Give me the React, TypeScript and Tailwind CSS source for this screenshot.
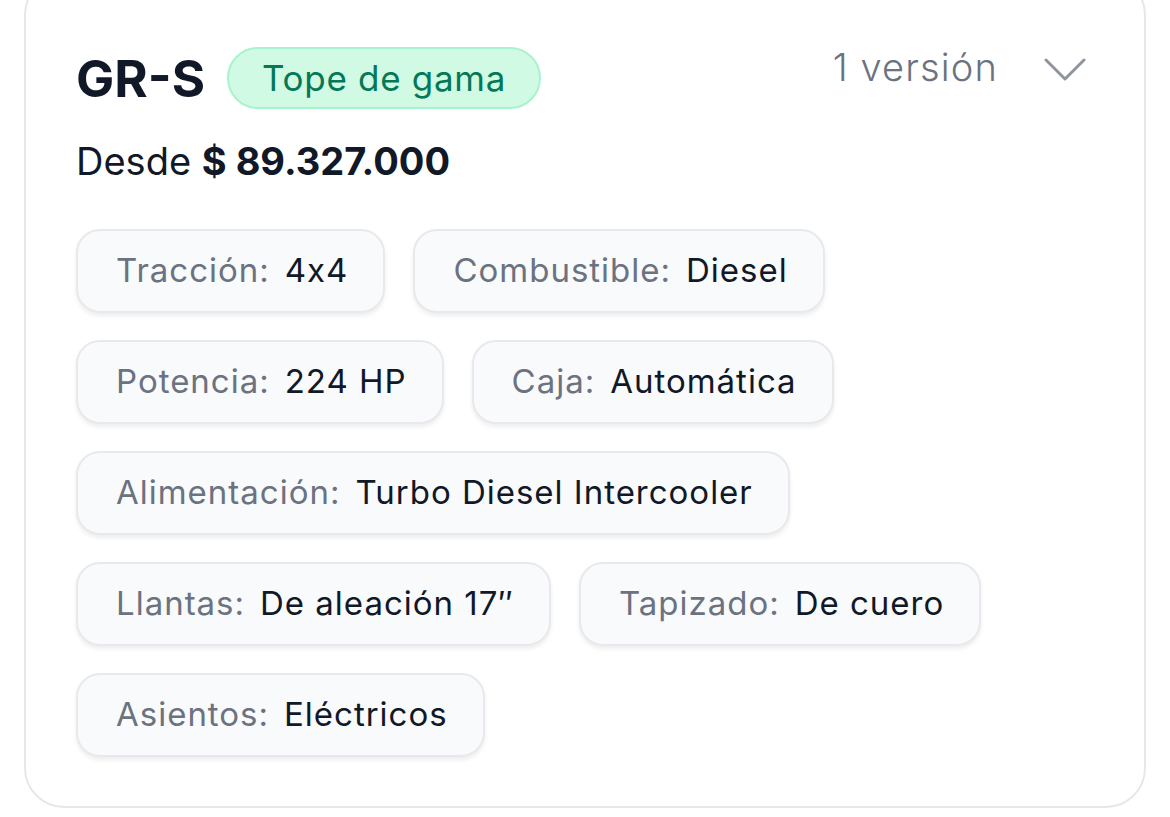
import React from "react";

const specs: { label: string; value: string }[][] = [
  [
    { label: "Tracción:", value: "4x4" },
    { label: "Combustible:", value: "Diesel" },
  ],
  [
    { label: "Potencia:", value: "224 HP" },
    { label: "Caja:", value: "Automática" },
  ],
  [{ label: "Alimentación:", value: "Turbo Diesel Intercooler" }],
  [
    { label: "Llantas:", value: "De aleación 17″" },
    { label: "Tapizado:", value: "De cuero" },
  ],
  [{ label: "Asientos:", value: "Eléctricos" }],
];

function Chip({ label, value }: { label: string; value: string }) {
  return (
    <div className="flex h-[84px] items-center gap-[15px] rounded-[24px] border-2 border-[#e8e9ed] bg-[#f9fafb] pl-[38px] pr-[35px] shadow-[0_3px_4px_rgba(0,0,0,0.07)]">
      <span className="text-[#6b7280]">{label}</span>
      <span className="text-[#111827]">{value}</span>
    </div>
  );
}

export default function App() {
  return (
    <div
      className="h-[817px] w-[1170px] overflow-hidden bg-white"
      style={{ fontFamily: "Inter, 'Noto Sans', sans-serif" }}
    >
      <div className="ml-[24px] mt-[-25px] h-[833px] w-[1122px] rounded-[40px] border-2 border-[#e6e7eb] bg-white pl-[50px] pr-[58px] pt-[70px]">
        <div className="flex items-start justify-between">
          <div className="flex items-center gap-[22px]">
            <span className="text-[51px] font-bold leading-none text-[#111827]">GR-S</span>
            <span className="flex h-[62px] items-center rounded-full border-2 border-[#a7f3d0] bg-[#d1fae5] px-[33px] text-[35px] tracking-[0.02em] text-[#047857]">
              Tope de gama
            </span>
          </div>
          <div className="mt-[-8px] flex items-center gap-[46px] text-[#6b7280]">
            <span className="text-[38px] font-light tracking-[0.03em]">1 versión</span>
            <svg width="42" height="26" viewBox="0 0 42 26" fill="none" className="mt-[4px]">
              <path d="M2 3 L21 22 L40 3" stroke="#8f959e" strokeWidth="3" strokeLinecap="round" strokeLinejoin="round" />
            </svg>
          </div>
        </div>
        <div className="mt-[28px] text-[38px] leading-[48px] text-[#111827]">
          Desde <span className="font-bold">$ 89.327.000</span>
        </div>
        <div className="mt-[44px] flex flex-col gap-[27px] text-[33px] tracking-[0.03em]">
          {specs.map((row, i) => (
            <div key={i} className="flex gap-[28px]">
              {row.map((s) => (
                <Chip key={s.label} label={s.label} value={s.value} />
              ))}
            </div>
          ))}
        </div>
      </div>
    </div>
  );
}
